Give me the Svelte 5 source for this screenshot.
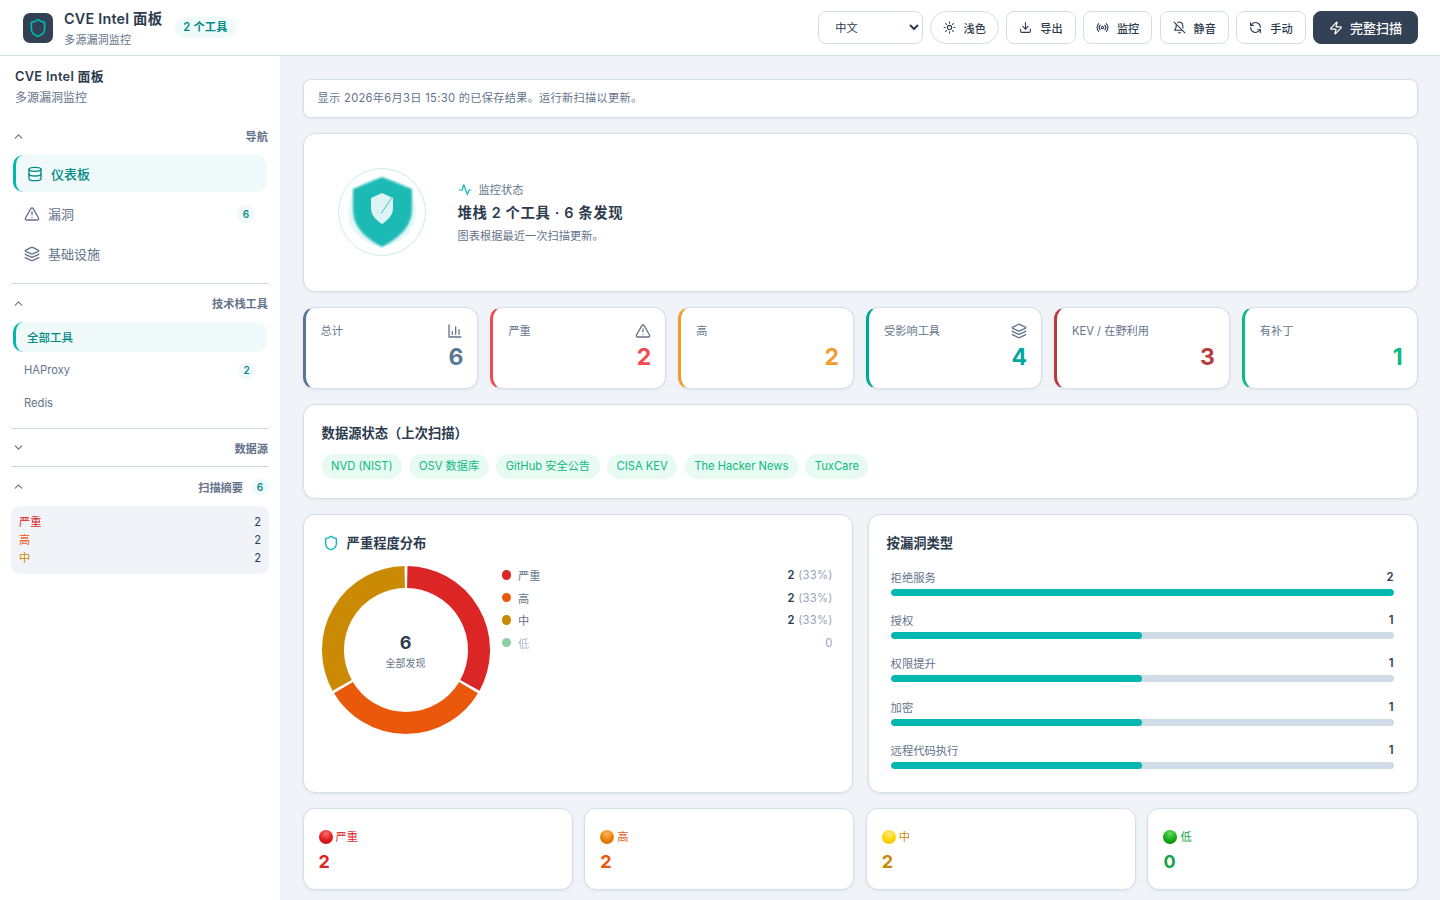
<script>
  const tools = [
    { name: "HAProxy", count: 2 },
    { name: "Redis", count: 0 },
  ];

  const stats = [
    { label: "总计", value: 6, color: "#5a7896", icon: "bars" },
    { label: "严重", value: 2, color: "#ef4b50", icon: "warn" },
    { label: "高", value: 2, color: "#f19d2c", icon: "" },
    { label: "受影响工具", value: 4, color: "#00a8a0", icon: "layers" },
    { label: "KEV / 在野利用", value: 3, color: "#b83c3c", icon: "" },
    { label: "有补丁", value: 1, color: "#10b981", icon: "" },
  ];

  const sources = ["NVD (NIST)", "OSV 数据库", "GitHub 安全公告", "CISA KEV", "The Hacker News", "TuxCare"];

  const legend = [
    { label: "严重", color: "#dc2626", count: 2, pct: "(33%)" },
    { label: "高", color: "#ea580c", count: 2, pct: "(33%)" },
    { label: "中", color: "#ca8a04", count: 2, pct: "(33%)" },
    { label: "低", color: "#16a34a", count: 0, pct: "" },
  ];

  const types = [
    { label: "拒绝服务", count: 2 },
    { label: "授权", count: 1 },
    { label: "权限提升", count: 1 },
    { label: "加密", count: 1 },
    { label: "远程代码执行", count: 1 },
  ];

  const sevCards = [
    { label: "严重", value: 2, color: "#dc2626", ball: "red" },
    { label: "高", value: 2, color: "#ea580c", ball: "orange" },
    { label: "中", value: 2, color: "#ca8a04", ball: "yellow" },
    { label: "低", value: 0, color: "#16a34a", ball: "green" },
  ];

  // donut arcs, three equal parts with a small gap
  const R = 73;
  const arc = (a, b) => {
    const p = (d) => {
      const t = ((d - 90) * Math.PI) / 180;
      return `${(84 + R * Math.cos(t)).toFixed(2)} ${(84 + R * Math.sin(t)).toFixed(2)}`;
    };
    return `M ${p(a)} A ${R} ${R} 0 0 1 ${p(b)}`;
  };
  const arcs = [
    { d: arc(1, 119), color: "#dc2626" },
    { d: arc(121, 239), color: "#ea580c" },
    { d: arc(241, 359), color: "#ca8a04" },
  ];
</script>

{#snippet shield()}
  <path d="M20 13c0 5-3.5 7.5-7.66 8.95a1 1 0 0 1-.67-.01C7.5 20.5 4 18 4 13V6a1 1 0 0 1 1-1c2 0 4.5-1.2 6.24-2.72a1.17 1.17 0 0 1 1.52 0C14.51 3.81 17 5 19 5a1 1 0 0 1 1 1z" />
{/snippet}
{#snippet warn()}
  <path d="m21.73 18-8-14a2 2 0 0 0-3.48 0l-8 14A2 2 0 0 0 4 21h16a2 2 0 0 0 1.73-3" /><path d="M12 9v4" /><path d="M12 17h.01" />
{/snippet}
{#snippet layers()}
  <path d="M12.83 2.18a2 2 0 0 0-1.66 0L2.6 6.08a1 1 0 0 0 0 1.83l8.58 3.91a2 2 0 0 0 1.66 0l8.58-3.9a1 1 0 0 0 0-1.83z" /><path d="M2 12a1 1 0 0 0 .58.91l8.6 3.91a2 2 0 0 0 1.65 0l8.58-3.9A1 1 0 0 0 22 12" /><path d="M2 17a1 1 0 0 0 .58.91l8.6 3.91a2 2 0 0 0 1.65 0l8.58-3.9A1 1 0 0 0 22 17" />
{/snippet}
{#snippet bars()}
  <path d="M3 3v18h18" /><path d="M8 17v-4" /><path d="M13 17V6" /><path d="M18 17v-7" />
{/snippet}
{#snippet chevUp()}
  <svg class="chev" viewBox="0 0 24 24"><path d="m6 15 6-6 6 6" /></svg>
{/snippet}

<div class="page">
  <header>
    <div class="brand">
      <span class="logo">
        <svg viewBox="0 0 24 24">{@render shield()}</svg>
      </span>
      <div class="brand-text">
        <div class="brand-title">CVE Intel 面板</div>
        <div class="brand-sub">多源漏洞监控</div>
      </div>
      <span class="pill">2 个工具</span>
    </div>
    <div class="actions">
      <select class="lang">
        <option>中文</option>
      </select>
      <button class="btn round">
        <svg viewBox="0 0 24 24"><circle cx="12" cy="12" r="4" /><path d="M12 2v2M12 20v2M4.9 4.9l1.4 1.4M17.7 17.7l1.4 1.4M2 12h2M20 12h2M4.9 19.1l1.4-1.4M17.7 6.3l1.4-1.4" /></svg>
        浅色
      </button>
      <button class="btn">
        <svg viewBox="0 0 24 24"><path d="M21 15v4a2 2 0 0 1-2 2H5a2 2 0 0 1-2-2v-4" /><path d="m7 10 5 5 5-5" /><path d="M12 15V3" /></svg>
        导出
      </button>
      <button class="btn">
        <svg viewBox="0 0 24 24"><path d="M4.9 19.1a10 10 0 0 1 0-14.2" /><path d="M7.8 16.2a6 6 0 0 1 0-8.4" /><circle cx="12" cy="12" r="2" /><path d="M16.2 7.8a6 6 0 0 1 0 8.4" /><path d="M19.1 4.9a10 10 0 0 1 0 14.2" /></svg>
        监控
      </button>
      <button class="btn">
        <svg viewBox="0 0 24 24"><path d="M8.7 3A6 6 0 0 1 18 8a21 21 0 0 0 .6 5" /><path d="M17 17H3s3-2 3-9a5 5 0 0 1 .3-1.7" /><path d="M10.3 21a1.9 1.9 0 0 0 3.4 0" /><path d="m2 2 20 20" /></svg>
        静音
      </button>
      <button class="btn">
        <svg viewBox="0 0 24 24"><path d="M21 12a9 9 0 0 0-15-6.7L3 8" /><path d="M3 3v5h5" /><path d="M3 12a9 9 0 0 0 15 6.7l3-2.7" /><path d="M16 16h5v5" /></svg>
        手动
      </button>
      <button class="btn primary">
        <svg viewBox="0 0 24 24"><path d="M4 14a1 1 0 0 1-.78-1.63l9.9-10.2a.5.5 0 0 1 .86.46l-1.92 6.02A1 1 0 0 0 13 10h7a1 1 0 0 1 .78 1.63l-9.9 10.2a.5.5 0 0 1-.86-.46l1.92-6.02A1 1 0 0 0 11 14z" /></svg>
        完整扫描
      </button>
    </div>
  </header>

  <div class="body">
    <aside>
      <div class="side-head">
        <div class="side-title">CVE Intel 面板</div>
        <div class="side-sub">多源漏洞监控</div>
      </div>

      <section class="group">
        <div class="group-head">{@render chevUp()}<span>导航</span></div>
        <div class="nav-item active">
          <svg viewBox="0 0 24 24"><ellipse cx="12" cy="5" rx="9" ry="3" /><path d="M3 5v14a9 3 0 0 0 18 0V5" /><path d="M3 12a9 3 0 0 0 18 0" /></svg>
          仪表板
        </div>
        <div class="nav-item">
          <svg viewBox="0 0 24 24">{@render warn()}</svg>
          漏洞
          <span class="count">6</span>
        </div>
        <div class="nav-item">
          <svg viewBox="0 0 24 24">{@render layers()}</svg>
          基础设施
        </div>
      </section>

      <section class="group">
        <div class="group-head">{@render chevUp()}<span>技术栈工具</span></div>
        <div class="tool-item active">全部工具</div>
        {#each tools as tool}
          <div class="tool-item">
            {tool.name}
            {#if tool.count}<span class="count small">{tool.count}</span>{/if}
          </div>
        {/each}
      </section>

      <section class="group">
        <div class="group-head closed">
          <svg class="chev" viewBox="0 0 24 24"><path d="m6 9 6 6 6-6" /></svg>
          <span>数据源</span>
        </div>
      </section>

      <section class="group last">
        <div class="group-head">
          {@render chevUp()}
          <span class="push">扫描摘要</span>
          <span class="count head-count">6</span>
        </div>
        <div class="summary">
          <div><span class="c-red">严重</span><b>2</b></div>
          <div><span class="c-orange">高</span><b>2</b></div>
          <div><span class="c-yellow">中</span><b>2</b></div>
        </div>
      </section>
    </aside>

    <main>
      <div class="notice">显示 2026年6月3日 15:30 的已保存结果。运行新扫描以更新。</div>

      <div class="card hero">
        <div class="hero-art">
          <svg viewBox="0 0 88 88" width="88" height="88">
            <defs>
              <filter id="soft" x="-20%" y="-20%" width="140%" height="140%"><feGaussianBlur stdDeviation="0.8" /></filter>
            </defs>
            <circle cx="44" cy="44" r="43.5" fill="none" stroke="#c4eeec" stroke-width="1" />
            <circle cx="44" cy="44" r="34" fill="#e9f8f7" />
            <path filter="url(#soft)" fill="#1fbab5" d="M44 9 74 21v20c0 18-13 29-30 38C27 70 15 59 15 41V21z" />
            <path fill="#def4f4" d="M44 25 55 30v10c0 7-5 12-11 16-6-4-11-9-11-16V30z" />
            <path d="M53.7 30 43.7 44.7" stroke="#3cc5c0" stroke-width="1" fill="none" />
          </svg>
        </div>
        <div class="hero-text">
          <div class="hero-label">
            <svg viewBox="0 0 24 24"><path d="M22 12h-3l-3 8-6-17-3 9H2" /></svg>
            监控状态
          </div>
          <div class="hero-title">堆栈 2 个工具 · 6 条发现</div>
          <div class="hero-sub">图表根据最近一次扫描更新。</div>
        </div>
      </div>

      <div class="stats">
        {#each stats as s}
          <div class="stat" style="--accent: {s.color}">
            <div class="stat-top">
              <span>{s.label}</span>
              {#if s.icon}
                <svg viewBox="0 0 24 24">
                  {#if s.icon === "bars"}{@render bars()}{:else if s.icon === "warn"}{@render warn()}{:else}{@render layers()}{/if}
                </svg>
              {/if}
            </div>
            <div class="stat-value">{s.value}</div>
          </div>
        {/each}
      </div>

      <div class="card sources">
        <h3>数据源状态（上次扫描）</h3>
        <div class="chips">
          {#each sources as src}<span class="chip">{src}</span>{/each}
        </div>
      </div>

      <div class="charts">
        <div class="card chart">
          <h3 class="with-icon">
            <svg viewBox="0 0 24 24">{@render shield()}</svg>
            严重程度分布
          </h3>
          <div class="donut-row">
            <div class="donut">
              <svg viewBox="0 0 168 168" width="168" height="168">
                {#each arcs as a}
                  <path d={a.d} fill="none" stroke={a.color} stroke-width="22" />
                {/each}
              </svg>
              <div class="donut-center">
                <strong>6</strong>
                <span>全部发现</span>
              </div>
            </div>
            <ul class="legend">
              {#each legend as l}
                <li class:zero={l.count === 0}>
                  <i style="background: {l.color}"></i>
                  <span class="legend-name">{l.label}</span>
                  {#if l.count}
                    <span class="legend-val"><b>{l.count}</b> <em>{l.pct}</em></span>
                  {:else}
                    <span class="legend-val"><em>{l.count}</em></span>
                  {/if}
                </li>
              {/each}
            </ul>
          </div>
        </div>

        <div class="card chart">
          <h3>按漏洞类型</h3>
          <div class="bars">
            {#each types as t}
              <div class="bar-row">
                <div class="bar-label"><span>{t.label}</span><b>{t.count}</b></div>
                <div class="track"><div class="fill" style="width: {(t.count / 2) * 100}%"></div></div>
              </div>
            {/each}
          </div>
        </div>
      </div>

      <div class="sev-cards">
        {#each sevCards as c}
          <div class="card sev" style="--c: {c.color}">
            <div class="sev-label"><span class="ball {c.ball}"></span>{c.label}</div>
            <div class="sev-value">{c.value}</div>
          </div>
        {/each}
      </div>
    </main>
  </div>
</div>

<style>
  :global(body) {
    margin: 0;
    font-family: Inter, "Noto Sans CJK SC", "Liberation Sans", sans-serif;
    color: #2d3b4e;
    background: #f0f4f8;
  }

  svg {
    fill: none;
    stroke: currentColor;
    stroke-width: 2;
    stroke-linecap: round;
    stroke-linejoin: round;
    flex-shrink: 0;
  }

  .page {
    height: 900px;
    overflow: hidden;
  }

  header {
    height: 55px;
    border-bottom: 1px solid #d5dde6;
    background: #fff;
    display: flex;
    align-items: center;
    justify-content: space-between;
    padding: 0 22px 0 23px;
  }

  .brand {
    display: flex;
    align-items: center;
  }

  .logo {
    width: 30px;
    height: 30px;
    border-radius: 7px;
    background: #334155;
    display: flex;
    align-items: center;
    justify-content: center;
    color: #00b8b0;
    margin-right: 11px;
  }

  .logo svg {
    width: 20px;
    height: 20px;
  }

  .brand-title {
    font-size: 14.4px;
    font-weight: 600;
    line-height: 20px;
    letter-spacing: 0.2px;
    margin-top: 1px;
  }

  .brand-sub {
    font-size: 11.2px;
    line-height: 16px;
    margin-top: 3px;
    color: #64748b;
  }

  .pill {
    margin-left: 13px;
    margin-top: -1px;
    padding: 0 8px;
    height: 21px;
    line-height: 21px;
    border-radius: 11px;
    background: #f0fafb;
    color: #008a84;
    font-size: 11.2px;
    font-weight: 600;
    letter-spacing: 0.2px;
  }

  .actions {
    display: flex;
    align-items: center;
    gap: 7.3px;
  }

  .lang {
    width: 105px;
    height: 33px;
    padding: 0 0 0 12px;
    margin-right: -1px;
    border: 1px solid #d5dde6;
    border-radius: 8px;
    background: #fff;
    color: #2d3b4e;
    font-size: 11.2px;
    font-family: inherit;
  }

  .btn {
    height: 33px;
    padding: 0 12px;
    display: flex;
    align-items: center;
    gap: 8px;
    border: 1px solid #d5dde6;
    border-radius: 8px;
    background: #fff;
    color: #2d3b4e;
    font-size: 11.2px;
    font-weight: 500;
    font-family: inherit;
    white-space: nowrap;
  }

  .btn svg {
    width: 13px;
    height: 13px;
  }

  .btn.round {
    border-radius: 17px;
  }

  .btn.primary {
    background: #334155;
    border-color: #334155;
    color: #fff;
    font-size: 13px;
    padding: 0 15px;
    gap: 7px;
  }

  .btn.primary svg {
    width: 14px;
    height: 14px;
  }

  .body {
    display: flex;
    height: 844px;
  }

  aside {
    width: 280px;
    flex-shrink: 0;
    background: #fff;
    padding: 13px 11px 0;
    box-sizing: border-box;
  }

  .side-head {
    padding: 0 4px;
    margin-bottom: 14px;
  }

  .side-title {
    font-size: 12.8px;
    font-weight: 600;
    line-height: 16px;
    letter-spacing: 0.3px;
  }

  .side-sub {
    font-size: 12px;
    line-height: 16px;
    margin-top: 5px;
    color: #64748b;
  }

  .group {
    border-bottom: 1px solid #ccd8e4;
    margin-bottom: 3.5px;
  }

  .group.last {
    border-bottom: 0;
    margin-bottom: 0;
  }

  .group-head {
    height: 32px;
    padding: 0 1px;
    display: flex;
    align-items: center;
    justify-content: space-between;
    color: #64748b;
    font-size: 11.2px;
    font-weight: 600;
  }

  .group-head.closed {
    height: 30px;
    margin-bottom: 3.5px;
  }

  .group.last .group-head {
    padding-right: 0;
  }

  .chev {
    width: 13px;
    height: 13px;
    color: #64748b;
  }

  .push {
    margin-left: auto;
  }

  .head-count {
    margin-left: 8px;
  }

  .nav-item {
    height: 37px;
    margin: 0 2px 3px;
    display: flex;
    align-items: center;
    gap: 8px;
    padding: 0 11px;
    font-size: 13px;
    color: #64748b;
    border-radius: 10px;
    box-sizing: border-box;
  }

  .nav-item:last-child {
    margin-bottom: 10.5px;
  }

  .nav-item svg {
    width: 16px;
    height: 16px;
  }

  .nav-item.active,
  .tool-item.active {
    background: #f0fafb;
    color: #008a84;
    font-weight: 500;
    border-left: 3px solid #00b8b0;
  }

  .nav-item.active {
    margin-top: 3px;
    padding-left: 11px;
  }

  .nav-item .count {
    margin-left: auto;
    margin-right: 1px;
  }

  .count {
    min-width: 18px;
    height: 18px;
    line-height: 18px;
    text-align: center;
    border-radius: 50%;
    background: #f0fafb;
    color: #008a84;
    font-size: 10px;
    font-weight: 600;
  }

  .count.small {
    min-width: 17px;
    height: 17px;
    line-height: 17px;
    margin-left: auto;
    margin-right: 1px;
  }

  .tool-item {
    height: 30px;
    margin: 0 2px 3px;
    padding: 0 11px;
    display: flex;
    align-items: center;
    font-size: 11.2px;
    color: #64748b;
    border-radius: 10px;
    box-sizing: border-box;
  }

  .tool-item.active {
    margin-top: 3px;
    font-size: 11.5px;
  }

  .tool-item:last-child {
    margin-bottom: 10px;
  }

  .summary {
    margin-top: 3.5px;
    padding: 6.5px 8px;
    background: #f0f4f8;
    border-radius: 9px;
    font-size: 11.2px;
    line-height: 18.3px;
  }

  .summary div {
    display: flex;
    justify-content: space-between;
  }

  .summary b {
    font-weight: 400;
    color: #2d3b4e;
  }

  .c-red {
    color: #dc2626;
  }
  .c-orange {
    color: #ea580c;
  }
  .c-yellow {
    color: #ca8a04;
  }

  main {
    flex: 1;
    padding: 23px 22.4px 0 22.6px;
    display: flex;
    flex-direction: column;
    gap: 15.2px;
    min-width: 0;
  }

  .card,
  .notice,
  .stat {
    background: #fff;
    border: 1px solid #d5dde8;
    box-shadow: 0 1px 3px rgba(45, 59, 78, 0.08);
    box-sizing: border-box;
  }

  .card {
    border-radius: 12px;
  }

  .notice {
    height: 39px;
    line-height: 37px;
    padding: 0 14px;
    border-radius: 8px;
    font-size: 11.2px;
    color: #64748b;
    letter-spacing: 0.3px;
  }

  .hero {
    height: 159px;
    display: flex;
    align-items: center;
    padding-left: 34px;
    gap: 32px;
  }

  .hero-art {
    width: 88px;
    height: 88px;
    margin-top: -1px;
  }

  .hero-art svg {
    stroke: none;
    display: block;
  }

  .hero-label {
    display: flex;
    align-items: center;
    gap: 7px;
    font-size: 11.2px;
    color: #64748b;
    line-height: 16px;
  }

  .hero-label svg {
    width: 14px;
    height: 14px;
    color: #00b8b0;
  }

  .hero-title {
    font-size: 14.4px;
    font-weight: 600;
    line-height: 20px;
    margin-top: 5px;
    letter-spacing: 0.6px;
  }

  .hero-sub {
    font-size: 11.2px;
    color: #64748b;
    line-height: 16px;
    margin-top: 5px;
    letter-spacing: 0.05px;
  }

  .stats {
    display: grid;
    grid-template-columns: repeat(6, 1fr);
    gap: 12px;
  }

  .stat {
    height: 81.6px;
    border-radius: 12px;
    border-left: 3px solid var(--accent);
    padding: 15px 14px 0 15px;
  }

  .stat-top {
    display: flex;
    justify-content: space-between;
    align-items: flex-start;
    height: 18px;
    font-size: 11.2px;
    line-height: 16px;
    color: #64748b;
  }

  .stat-top svg {
    width: 16px;
    height: 16px;
    color: #64748b;
  }

  .stat-value {
    text-align: right;
    color: var(--accent);
    font-size: 23px;
    font-weight: 700;
    line-height: 28px;
    margin-top: 2px;
  }

  h3 {
    margin: 0;
    font-size: 13.3px;
    font-weight: 600;
    line-height: 18px;
  }

  .sources {
    height: 94.6px;
    padding: 19px 18px 0;
  }

  .chips {
    display: flex;
    gap: 7.5px;
    margin-top: 12px;
  }

  .chip {
    height: 25px;
    line-height: 25px;
    padding: 0 9.5px;
    border-radius: 13px;
    background: #e8fbf3;
    color: #10b981;
    font-size: 11.2px;
    white-space: nowrap;
  }

  .charts {
    display: grid;
    grid-template-columns: 1fr 1fr;
    gap: 15px;
  }

  .chart {
    height: 279px;
    padding: 19px 18px 0;
  }

  .with-icon {
    display: flex;
    align-items: center;
    gap: 8px;
    padding-left: 1px;
  }

  .with-icon svg {
    width: 16px;
    height: 16px;
    color: #00b8c0;
  }

  .donut-row {
    display: flex;
    gap: 11px;
    margin-top: 14px;
  }

  .donut {
    position: relative;
    width: 168px;
    height: 168px;
    flex-shrink: 0;
  }

  .donut svg {
    display: block;
    stroke-linecap: butt;
  }

  .donut-center {
    position: absolute;
    inset: 2px 0 0;
    display: flex;
    flex-direction: column;
    align-items: center;
    justify-content: center;
  }

  .donut-center strong {
    font-size: 18px;
    font-weight: 700;
    line-height: 22px;
  }

  .donut-center span {
    font-size: 10px;
    color: #64748b;
    line-height: 14px;
    margin-top: 2px;
  }

  .legend {
    flex: 1;
    list-style: none;
    margin: -2px 0 0;
    padding: 0;
    font-size: 11.2px;
    color: #64748b;
  }

  .legend li {
    display: flex;
    align-items: center;
    height: 22.5px;
  }

  .legend i {
    width: 9.5px;
    height: 9.5px;
    border-radius: 50%;
    margin: 0 7px 0 1px;
  }

  .legend-val {
    margin-left: auto;
    margin-right: 1px;
    letter-spacing: 0.3px;
  }

  .legend b {
    color: #2d3b4e;
    font-weight: 600;
  }

  .legend em {
    font-style: normal;
    color: #94a3b8;
  }

  .legend .zero i,
  .legend .zero .legend-name {
    opacity: 0.5;
  }

  .bars {
    padding: 0 5px 0 4px;
    margin-top: 16px;
  }

  .bar-row {
    height: 43.25px;
  }

  .bar-label {
    display: flex;
    justify-content: space-between;
    align-items: center;
    height: 18px;
    margin-bottom: 3px;
    font-size: 11.3px;
    color: #64748b;
  }

  .bar-label b {
    color: #2d3b4e;
    font-weight: 600;
  }

  .track {
    height: 7px;
    border-radius: 4px;
    background: #cfdbe6;
    overflow: hidden;
  }

  .fill {
    height: 100%;
    background: #00b8b0;
    border-radius: 4px;
  }

  .sev-cards {
    display: grid;
    grid-template-columns: repeat(4, 1fr);
    gap: 11.5px;
  }

  .sev {
    height: 82px;
    padding: 20px 15px 0;
  }

  .sev-label {
    display: flex;
    align-items: center;
    gap: 3px;
    font-size: 11.2px;
    line-height: 16px;
    color: var(--c);
  }

  .sev-value {
    color: var(--c);
    font-size: 18px;
    font-weight: 700;
    line-height: 22px;
    margin-top: 6px;
  }

  .ball {
    width: 14px;
    height: 14px;
    border-radius: 50%;
  }

  .ball.red {
    background: radial-gradient(circle at 50% 25%, #ff6b6b, #e01b1b 55%, #b80f0f);
  }
  .ball.orange {
    background: radial-gradient(circle at 50% 25%, #ffb35c, #e88209 55%, #c96a00);
  }
  .ball.yellow {
    background: radial-gradient(circle at 50% 25%, #ffe680, #ffd800 55%, #f0b400);
  }
  .ball.green {
    background: radial-gradient(circle at 50% 25%, #5fe05f, #14a814 55%, #0a7d0a);
  }
</style>
